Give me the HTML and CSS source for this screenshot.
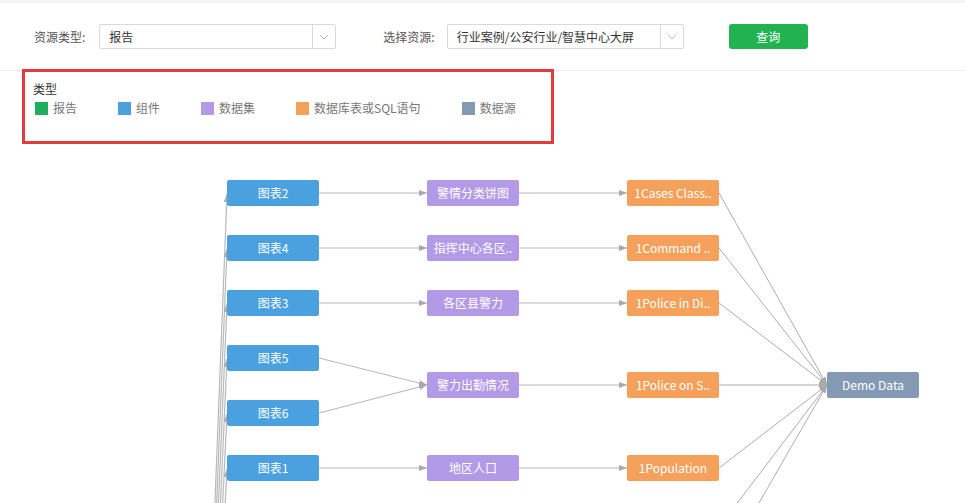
FILE: index.html
```html
<!DOCTYPE html>
<html lang="zh-CN">
<head>
    <meta charset="UTF-8">
    <meta name="viewport" content="width=device-width, initial-scale=1.0">
    <title>资源血缘关系</title>
    <link rel="stylesheet" href="styles.css">
</head>
<body>
    <div class="filter-bar">
        <label class="filter-label">资源类型:</label>
        <div class="select select-type">
            <span class="select-value">报告</span>
            <span class="select-arrow"><svg width="10" height="6" viewBox="0 0 10 6"><path d="M1 1 L5 5 L9 1" fill="none" stroke="#b8b8b8" stroke-width="1"/></svg></span>
        </div>
        <label class="filter-label label-res">选择资源:</label>
        <div class="select select-res">
            <span class="select-value">行业案例/公安行业/智慧中心大屏</span>
            <span class="select-arrow"><svg width="10" height="6" viewBox="0 0 10 6"><path d="M1 1 L5 5 L9 1" fill="none" stroke="#b8b8b8" stroke-width="1"/></svg></span>
        </div>
        <button class="btn-query">查询</button>
    </div>

    <div class="legend">
        <div class="legend-title">类型</div>
        <div class="legend-items">
            <span class="legend-item"><i class="dot report"></i>报告</span>
            <span class="legend-item"><i class="dot widget"></i>组件</span>
            <span class="legend-item"><i class="dot dataset"></i>数据集</span>
            <span class="legend-item"><i class="dot table"></i>数据库表或SQL语句</span>
            <span class="legend-item"><i class="dot source"></i>数据源</span>
        </div>
    </div>

    <!-- 血缘图，坐标直接按页面位置写 -->
    <svg class="graph" width="965" height="359" viewBox="0 144 965 359">
        <defs>
            <marker id="arr" markerWidth="8" markerHeight="6" refX="8" refY="3" orient="auto" markerUnits="userSpaceOnUse">
                <path d="M0,0 L8,3 L0,6 z" fill="#a9a9a9"/>
            </marker>
        </defs>

        <!-- 报告 -> 组件 -->
        <g class="edge">
            <line x1="200" y1="885" x2="227" y2="194" marker-end="url(#arr)"/>
            <line x1="201" y1="885" x2="227" y2="249" marker-end="url(#arr)"/>
            <line x1="202" y1="885" x2="227" y2="304" marker-end="url(#arr)"/>
            <line x1="203" y1="885" x2="227" y2="359" marker-end="url(#arr)"/>
            <line x1="204" y1="885" x2="227" y2="414" marker-end="url(#arr)"/>
            <line x1="205" y1="885" x2="227" y2="469" marker-end="url(#arr)"/>
            <line x1="206" y1="885" x2="227" y2="524" marker-end="url(#arr)"/>
        </g>

        <!-- 组件 -> 数据集 -->
        <g class="edge">
            <line x1="319" y1="193" x2="427" y2="193" marker-end="url(#arr)"/>
            <line x1="319" y1="248" x2="427" y2="248" marker-end="url(#arr)"/>
            <line x1="319" y1="303" x2="427" y2="303" marker-end="url(#arr)"/>
            <line x1="319" y1="358" x2="427" y2="385" marker-end="url(#arr)"/>
            <line x1="319" y1="413" x2="427" y2="385" marker-end="url(#arr)"/>
            <line x1="319" y1="468" x2="427" y2="468" marker-end="url(#arr)"/>
        </g>

        <!-- 数据集 -> 表 -->
        <g class="edge">
            <line x1="519" y1="193" x2="627" y2="193" marker-end="url(#arr)"/>
            <line x1="519" y1="248" x2="627" y2="248" marker-end="url(#arr)"/>
            <line x1="519" y1="303" x2="627" y2="303" marker-end="url(#arr)"/>
            <line x1="519" y1="385" x2="627" y2="385" marker-end="url(#arr)"/>
            <line x1="519" y1="468" x2="627" y2="468" marker-end="url(#arr)"/>
        </g>

        <!-- 表 -> 数据源 -->
        <g class="edge thin">
            <line x1="719" y1="193" x2="827" y2="385" marker-end="url(#arr)"/>
            <line x1="719" y1="248" x2="827" y2="385" marker-end="url(#arr)"/>
            <line x1="719" y1="303" x2="827" y2="385" marker-end="url(#arr)"/>
            <line x1="719" y1="385" x2="827" y2="385" marker-end="url(#arr)"/>
            <line x1="719" y1="468" x2="827" y2="385" marker-end="url(#arr)"/>
            <line x1="694" y1="560" x2="827" y2="385" marker-end="url(#arr)"/>
            <line x1="726" y1="560" x2="827" y2="385" marker-end="url(#arr)"/>
        </g>

        <!-- 组件 -->
        <g class="node widget">
            <rect x="227" y="180" width="92" height="26" rx="2"/><text x="273" y="192">图表2</text>
            <rect x="227" y="235" width="92" height="26" rx="2"/><text x="273" y="247">图表4</text>
            <rect x="227" y="290" width="92" height="26" rx="2"/><text x="273" y="302">图表3</text>
            <rect x="227" y="345" width="92" height="26" rx="2"/><text x="273" y="357">图表5</text>
            <rect x="227" y="400" width="92" height="26" rx="2"/><text x="273" y="412">图表6</text>
            <rect x="227" y="455" width="92" height="26" rx="2"/><text x="273" y="467">图表1</text>
        </g>

        <!-- 数据集 -->
        <g class="node dataset">
            <rect x="427" y="180" width="92" height="26" rx="2"/><text x="473" y="192">警情分类饼图</text>
            <rect x="427" y="235" width="92" height="26" rx="2"/><text x="473" y="247">指挥中心各区..</text>
            <rect x="427" y="290" width="92" height="26" rx="2"/><text x="473" y="302">各区县警力</text>
            <rect x="427" y="372" width="92" height="26" rx="2"/><text x="473" y="384">警力出勤情况</text>
            <rect x="427" y="455" width="92" height="26" rx="2"/><text x="473" y="467">地区人口</text>
        </g>

        <!-- 数据库表 -->
        <g class="node table">
            <rect x="627" y="180" width="92" height="26" rx="2"/><text x="673" y="192">1Cases Class..</text>
            <rect x="627" y="235" width="92" height="26" rx="2"/><text x="673" y="247">1Command ..</text>
            <rect x="627" y="290" width="92" height="26" rx="2"/><text x="673" y="302">1Police in Di..</text>
            <rect x="627" y="372" width="92" height="26" rx="2"/><text x="673" y="384">1Police on S..</text>
            <rect x="627" y="455" width="92" height="26" rx="2"/><text x="673" y="467">1Population</text>
        </g>

        <!-- 数据源 -->
        <g class="node source">
            <rect x="827" y="372" width="92" height="26" rx="2"/><text x="873" y="384">Demo Data</text>
        </g>
    </svg>
</body>
</html>
```

FILE: styles.css
```css
body {
    margin: 0;
    font-family: "Noto Sans CJK SC", "Open Sans", sans-serif;
    font-size: 12px;
    color: #333;
    background: #fff;
    overflow: hidden;
    height: 503px;
}
.filter-bar {
    display: flex;
    align-items: center;
    padding-left: 34px;
    border-top: 3px solid #f4f4f4;
    border-bottom: 1px solid #eeeeee;
    box-sizing: border-box;
    height: 71px;
}
.filter-label {
    color: #555;
    margin-right: 14px;
}
.label-res {
    margin-left: 47px;
    margin-right: 12px;
}
.select {
    display: flex;
    align-items: center;
    width: 237px;
    height: 25px;
    border: 1px solid #d9d9d9;
    border-radius: 2px;
    box-sizing: border-box;
}
.select-value {
    flex: 1;
    padding-left: 9px;
    color: #333;
    white-space: nowrap;
    overflow: hidden;
}
.select-arrow {
    width: 22px;
    height: 23px;
    border-left: 1px solid #d9d9d9;
    display: flex;
    align-items: center;
    justify-content: center;
}
.btn-query {
    margin-left: 45px;
    width: 79px;
    height: 25px;
    border: none;
    border-radius: 3px;
    background: #21b352;
    color: #fff;
    font-family: inherit;
    font-size: 12px;
}
.legend {
    margin: -2px 0 0 22px;
    width: 532px;
    height: 75px;
    border: 3px solid #e53a3a;
    box-sizing: border-box;
    padding: 9px 0 0 8px;
}
.legend-title {
    color: #333;
    line-height: 16px;
}
.legend-items {
    display: flex;
    align-items: center;
    margin-top: 3px;
    padding-left: 2px;
    color: #777;
    line-height: 16px;
    white-space: nowrap;
}
.legend-item {
    display: flex;
    align-items: center;
    flex-shrink: 0;
    margin-right: 41px;
}
.dot {
    display: inline-block;
    width: 13px;
    height: 13px;
    margin-right: 5px;
}
.dot.report { background: #1fae5b; }
.dot.widget { background: #4ba0e0; }
.dot.dataset { background: #b29ae6; }
.dot.table { background: #f5a05b; }
.dot.source { background: #8399b4; }

.graph {
    display: block;
}
.edge line {
    stroke: #b9b9b9;
    stroke-width: 1.2;
}
.edge.thin line {
    stroke: #acacac;
    stroke-width: 1;
}
.node text {
    fill: #fff;
    font-size: 12px;
    text-anchor: middle;
    dominant-baseline: central;
}
.node.widget rect { fill: #4ba0e0; }
.node.dataset rect { fill: #b29ae6; }
.node.table rect { fill: #f5a05b; }
.node.source rect { fill: #8399b4; }
```
